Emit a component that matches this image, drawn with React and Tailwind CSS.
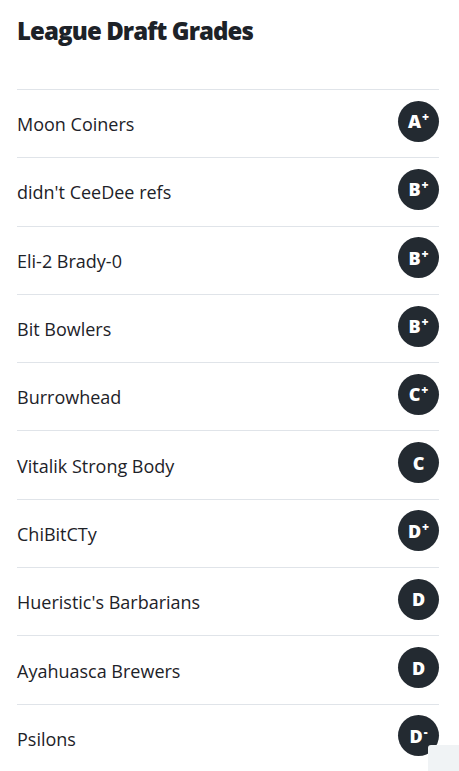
const teams = [
  { name: 'Moon Coiners', grade: 'A', mod: '+' },
  { name: "didn't CeeDee refs", grade: 'B', mod: '+' },
  { name: 'Eli-2 Brady-0', grade: 'B', mod: '+' },
  { name: 'Bit Bowlers', grade: 'B', mod: '+' },
  { name: 'Burrowhead', grade: 'C', mod: '+' },
  { name: 'Vitalik Strong Body', grade: 'C', mod: '' },
  { name: 'ChiBitCTy', grade: 'D', mod: '+' },
  { name: "Hueristic's Barbarians", grade: 'D', mod: '' },
  { name: 'Ayahuasca Brewers', grade: 'D', mod: '' },
  { name: 'Psilons', grade: 'D', mod: '-' },
];

function GradeBadge({ grade, mod }) {
  return (
    <div className="-mt-[5px] flex h-[41px] w-[41px] items-center justify-center rounded-full bg-[#232a31] text-white">
      <span className="text-[18px] font-extrabold leading-none">{grade}</span>
      {mod && <span className="-mt-[8px] ml-[1px] text-[12px] font-extrabold leading-none">{mod}</span>}
    </div>
  );
}

export default function App() {
  return (
    <div className="relative min-h-[771px] bg-white font-['Open_Sans',sans-serif] text-[#1d2228]">
      <div className="pl-[17px] pr-[20px]">
        <h1 className="pt-[15px] text-[24px] font-extrabold leading-[32px] tracking-[-0.9px]">League Draft Grades</h1>
        <div className="mt-[42px]">
          {teams.map((t) => (
            <div
              key={t.name}
              className="flex h-[68.3px] items-center justify-between border-t border-[#e0e4e9]"
            >
              <span className="mt-[2px] text-[18px]">{t.name}</span>
              <GradeBadge grade={t.grade} mod={t.mod} />
            </div>
          ))}
        </div>
      </div>
      <div className="absolute bottom-0 right-0 h-[27px] w-[31px] rounded-tl-[3px] bg-[#f0f3f5]" />
    </div>
  );
}
